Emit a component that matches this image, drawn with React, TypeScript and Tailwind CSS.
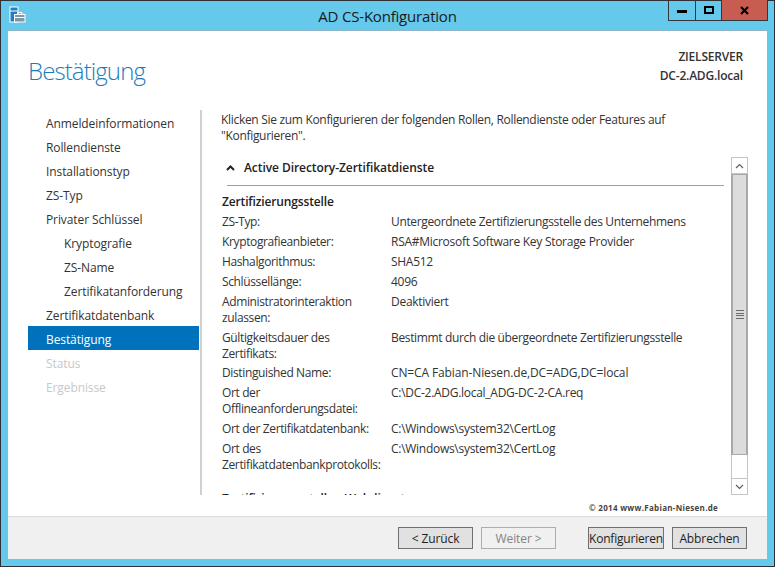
const steps = [
  { label: 'Anmeldeinformationen' },
  { label: 'Rollendienste' },
  { label: 'Installationstyp' },
  { label: 'ZS-Typ' },
  { label: 'Privater Schlüssel' },
  { label: 'Kryptografie', sub: true },
  { label: 'ZS-Name', sub: true },
  { label: 'Zertifikatanforderung', sub: true },
  { label: 'Zertifikatdatenbank' },
  { label: 'Bestätigung', active: true },
  { label: 'Status', disabled: true },
  { label: 'Ergebnisse', disabled: true },
]

const rows = [
  { name: ['ZS-Typ:'], value: 'Untergeordnete Zertifizierungsstelle des Unternehmens', first: true },
  { name: ['Kryptografieanbieter:'], value: 'RSA#Microsoft Software Key Storage Provider' },
  { name: ['Hashalgorithmus:'], value: 'SHA512' },
  { name: ['Schlüssellänge:'], value: '4096' },
  { name: ['Administratorinteraktion', 'zulassen:'], value: 'Deaktiviert' },
  { name: ['Gültigkeitsdauer des', 'Zertifikats:'], value: 'Bestimmt durch die übergeordnete Zertifizierungsstelle', first: true },
  { name: ['Distinguished Name:'], value: 'CN=CA Fabian-Niesen.de,DC=ADG,DC=local', tight: true },
  { name: ['Ort der', 'Offlineanforderungsdatei:'], value: 'C:\\DC-2.ADG.local_ADG-DC-2-CA.req' },
  { name: ['Ort der Zertifikatdatenbank:'], value: 'C:\\Windows\\system32\\CertLog' },
  { name: ['Ort des', 'Zertifikatdatenbankprotokolls:'], value: 'C:\\Windows\\system32\\CertLog' },
]

function AppIcon() {
  return (
    <svg width="17" height="17" viewBox="0 0 17 17">
      <rect x="1" y="1" width="8" height="15" fill="#1f7fc4" stroke="#fff" />
      <line x1="1" y1="5" x2="9" y2="5" stroke="#fff" />
      <rect x="5.5" y="8.5" width="10.5" height="7.5" fill="#7f95a8" stroke="#fff" />
      <path d="M8.5 8.5V6.5h4.5v2" fill="none" stroke="#fff" />
      <line x1="6" y1="11.5" x2="16" y2="11.5" stroke="#fff" />
    </svg>
  )
}

function Chevron({ up, heavy, className }: { up?: boolean; heavy?: boolean; className?: string }) {
  return (
    <svg width="9" height="6" viewBox="0 0 9 6" className={className}>
      <path d={up ? 'M1 5l3.5-3.5L8 5' : 'M1 1l3.5 3.5L8 1'} fill="none" stroke="currentColor" strokeWidth={heavy ? 2 : 1.2} />
    </svg>
  )
}

function Button({ label, disabled, wide }: { label: string; disabled?: boolean; wide?: boolean }) {
  return (
    <div
      className={
        disabled
          ? 'w-[75px] h-[22px] pt-px flex items-center justify-center border border-[#adadad] bg-[#f0f0f0] text-[#838383] tracking-[-0.1px]'
          : wide
            ? 'w-[76px] h-[22px] pt-px flex items-center justify-center border border-[#707070] bg-[#e1e1e1] text-[#1e1e1e] tracking-[-0.2px]'
            : 'w-[75px] h-[22px] pt-px flex items-center justify-center border border-[#707070] bg-[#e1e1e1] text-[#1e1e1e] tracking-[-0.1px]'
      }
    >
      {label}
    </div>
  )
}

export default function App() {
  return (
    <div
      className="w-[775px] h-[567px] flex flex-col border border-[#2f3136] bg-[#65c9ec] text-[12px] leading-[16px] text-[#333]"
      style={{ fontFamily: '"Open Sans", "Noto Sans", sans-serif' }}
    >
      {/* Title bar */}
      <div className="h-[29px] flex items-start shrink-0">
        <div className="w-[106px] pl-[8px] pt-[5px]">
          <AppIcon />
        </div>
        <div className="flex-1 pt-[5px] text-center text-[15px] leading-[20px] tracking-[-0.2px] text-[#1a1a1a]">
          AD CS-Konfiguration
        </div>
        <div className="flex h-[21px] w-[100px] mr-[6px] border-x border-b border-[#33363b] -mt-px">
          <div className="w-[27px] flex items-center justify-center border-r border-[#33363b]">
            <div className="w-[10px] h-[3px] mt-[3px] bg-black" />
          </div>
          <div className="w-[26px] flex items-center justify-center border-r border-[#33363b]">
            <div className="w-[10px] h-[8px] border-2 border-black" />
          </div>
          <div className="flex-1 flex items-center justify-center bg-[#c75c50]">
            <svg width="9" height="9" viewBox="0 0 9 9">
              <path d="M1 1l7 7M8 1l-7 7" stroke="#000" strokeWidth="2.2" />
            </svg>
          </div>
        </div>
      </div>

      {/* Window body */}
      <div className="relative mx-[7px] h-[486px] bg-white flex flex-col shrink-0 border-t border-[#8fb6c8]">
        <div className="h-[79px] flex justify-between pl-[20px] pr-[24px] shrink-0">
          <div className="pt-[22px] text-[24px] leading-[36px] font-light tracking-[-0.9px] text-[#1b7db8]">Bestätigung</div>
          <div className="pt-[16px] text-right font-semibold leading-[19px] tracking-[-0.2px] text-[#333]">
            <div>ZIELSERVER</div>
            <div>DC-2.ADG.local</div>
          </div>
        </div>

        <div className="flex pl-[20px]">
          <div className="w-[172px] h-[385px] border-r-2 border-[#d0d0d0] box-content shrink-0 tracking-[-0.1px]">
            {steps.map((s) => (
              <div
                key={s.label}
                className={
                  s.active
                    ? 'h-[24px] w-[171px] pt-[4px] flex items-center pl-[18px] bg-[#0072bc] text-white'
                    : s.disabled
                      ? 'h-[24px] pt-[4px] flex items-center pl-[18px] text-[#c8c8c8]'
                      : s.sub
                        ? 'h-[24px] pt-[4px] flex items-center pl-[36px]'
                        : 'h-[24px] pt-[4px] flex items-center pl-[18px]'
                }
              >
                {s.label}
              </div>
            ))}
          </div>

          <div className="flex-1 pl-[19px] pr-[20px] min-w-0">
            <div className="pt-[2px] h-[47px] tracking-[-0.31px]">
              Klicken Sie zum Konfigurieren der folgenden Rollen, Rollendienste oder Features auf
              <br />
              "Konfigurieren".
            </div>
            <div className="flex h-[338px]">
              <div className="w-[510px] overflow-hidden shrink-0 pt-[3px]">
                <div className="flex items-center pl-[5px] font-semibold text-[#222] h-[16px] mr-[7px] tracking-[-0.07px]">
                  <Chevron up heavy className="text-[#222] mr-[9px]" />
                  Active Directory-Zertifikatdienste
                </div>
                <div className="ml-[6px] mr-[7px] mt-[9px] border-t border-[#a0a0a0]" />
                <div className="mt-[8px] pl-px font-semibold text-[#222] tracking-[-0.15px]">Zertifizierungsstelle</div>
                <div className="mt-[4px] flex flex-col gap-[4px] tracking-[-0.37px]">
                  {rows.map((r) => (
                    <div key={r.name[0]} className={r.tight ? 'flex -mt-px' : 'flex'}>
                      <div className="w-[170px] pl-px shrink-0">
                        {r.name.map((n) => (
                          <div key={n}>{n}</div>
                        ))}
                      </div>
                      <div className={r.first ? 'tracking-[-0.35px]' : r.tight ? 'tracking-[-0.12px]' : 'tracking-[-0.28px]'}>{r.value}</div>
                    </div>
                  ))}
                </div>
                <div className="mt-[18px] pl-px font-semibold text-[#222] tracking-[-0.15px]">Zertifizierungsstellen-Webdienste</div>
              </div>

              {/* Scroll bar */}
              <div className="w-[17px] flex flex-col shrink-0 text-[#606060]">
                <div className="h-[17px] flex items-center justify-center bg-white border border-[#c4c4c4]">
                  <Chevron up />
                </div>
                <div className="h-[281px] flex items-center justify-center bg-[#dcdcdc] border-x-2 border-y border-[#a8a8a8]">
                  <div className="w-[8px] h-[9px] flex flex-col justify-between">
                    <div className="h-px bg-[#6a6a6a]" />
                    <div className="h-px bg-[#6a6a6a]" />
                    <div className="h-px bg-[#6a6a6a]" />
                    <div className="h-px bg-[#6a6a6a]" />
                  </div>
                </div>
                <div className="flex-1 border-x border-[#c4c4c4] bg-white" />
                <div className="h-[17px] flex items-center justify-center bg-white border border-[#c4c4c4]">
                  <Chevron />
                </div>
              </div>
            </div>
          </div>
        </div>

        <div className="absolute left-[581px] top-[472px] text-[8px] leading-[9px] font-bold tracking-[0.3px] text-[#444]">
          © 2014 www.Fabian-Niesen.de
        </div>
      </div>

      {/* Footer */}
      <div className="mx-[7px] h-[43px] bg-[#f0f0f0] border-t border-[#dcdcdc] flex items-center justify-end pr-[20px] shrink-0">
        <div className="flex gap-[8px] mr-[32px]">
          <Button label="< Zurück" />
          <Button label="Weiter >" disabled />
        </div>
        <div className="flex gap-[8px]">
          <Button label="Konfigurieren" wide />
          <Button label="Abbrechen" />
        </div>
      </div>
    </div>
  )
}
